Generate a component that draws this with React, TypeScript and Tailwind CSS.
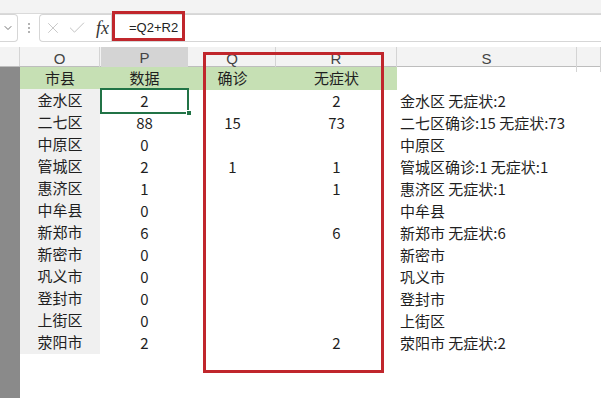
import { Check, ChevronDown, X } from "lucide-react";

const cjk = "font-['Noto_Sans_CJK_SC','Noto_Sans',sans-serif]";

const rows: [string, string, string, string][] = [
  ["金水区", "2", "", "2"],
  ["二七区", "88", "15", "73"],
  ["中原区", "0", "", ""],
  ["管城区", "2", "1", "1"],
  ["惠济区", "1", "", "1"],
  ["中牟县", "0", "", ""],
  ["新郑市", "6", "", "6"],
  ["新密市", "0", "", ""],
  ["巩义市", "0", "", ""],
  ["登封市", "0", "", ""],
  ["上街区", "0", "", ""],
  ["荥阳市", "2", "", "2"],
];

// S column: =O & IF(Q,"确诊:"&Q,"") & IF(R," 无症状:"&R,"")
function summary(name: string, q: string, r: string) {
  return name + (q ? `确诊:${q}` : "") + (r ? ` 无症状:${r}` : "");
}

const cols = "grid grid-cols-[80px_89px_87px_121px_180px_1fr]";

export default function App() {
  return (
    <div className={`relative w-[601px] h-[398px] overflow-hidden bg-white text-[#1f1f1f] ${cjk}`}>
      {/* ribbon edge */}
      <div className="h-[14px] bg-[#f3f3f3] border-b border-[#dadada]" />

      {/* formula bar */}
      <div className="flex h-[28px]">
        <div className="w-[18px] flex items-center justify-end pr-[3px] border-y border-r border-[#d6d6d6] rounded-r-[4px]">
          <ChevronDown size={12} strokeWidth={1.5} className="text-[#444]" />
        </div>
        <div className="w-[21px] flex flex-col items-center justify-center gap-[2px]">
          <div className="w-[2px] h-[2px] rounded-full bg-[#9a9a9a]" />
          <div className="w-[2px] h-[2px] rounded-full bg-[#9a9a9a]" />
          <div className="w-[2px] h-[2px] rounded-full bg-[#9a9a9a]" />
        </div>
        <div className="w-[72px] flex items-center pl-[4px] gap-[5px] border-y border-l border-[#d6d6d6] rounded-l-[4px]">
          <X size={18} strokeWidth={1.1} className="text-[#bdbdbd]" />
          <Check size={20} strokeWidth={1.1} className="text-[#bdbdbd]" />
          <span className="ml-[4px] font-['Liberation_Serif',serif] italic text-[18px] leading-none text-[#333]">fx</span>
        </div>
        <div className="flex-1 flex items-center pl-[17px] border-y border-l border-[#d6d6d6] font-['Liberation_Sans',sans-serif] text-[13px] text-[#222]">
          =Q2+R2
        </div>
      </div>

      {/* column headings */}
      <div className="mt-[5px] flex h-[20px] bg-[#f3f3f3] border-b border-[#bdbdbd] font-['Liberation_Sans',sans-serif] text-[15px] text-[#444]">
        <div className="w-[20px] border-r border-[#d4d4d4]" />
        <div className={`flex-1 ${cols}`}>
          {["O", "P", "Q", "R", "S", ""].map((c) => (
            <div
              key={c}
              className={
                c === "P"
                  ? "flex items-center justify-center bg-[#d4d4d4] border-b-2 border-[#217346] mx-px"
                  : "flex items-center justify-center border-r border-[#d4d4d4]"
              }
            >
              {c}
            </div>
          ))}
        </div>
      </div>

      {/* sheet body */}
      <div className="flex h-[331px]">
        <div className="w-[20px] bg-[#8a8a8a]" />
        <div className="flex-1 flex flex-col text-[15px]">
          <div className={`${cols} h-[22px]`}>
            <div className="col-span-4 grid grid-cols-[80px_89px_87px_121px] bg-[#c6e0b4]">
              <div className="flex items-center justify-center">市县</div>
              <div className="flex items-center justify-center">数据</div>
              <div className="flex items-center justify-center">确诊</div>
              <div className="flex items-center justify-center">无症状</div>
            </div>
          </div>
          {rows.map(([name, total, q, r], i) => (
            <div key={name} className={`${cols} h-[22px]`}>
              <div className="flex items-center justify-center bg-[#f0f0f0] border-b border-white">{name}</div>
              <div className="relative flex items-center justify-center">
                {total}
                {i === 0 && (
                  <>
                    <div className="absolute -top-px -bottom-px left-0 right-0 border-2 border-[#217346]" />
                    <div className="absolute -bottom-[3px] -right-[3px] w-[6px] h-[6px] bg-[#217346] border border-white" />
                  </>
                )}
              </div>
              <div className="flex items-center justify-center">{q}</div>
              <div className="flex items-center justify-center">{r}</div>
              <div className="flex items-center pl-[3px] whitespace-nowrap">{summary(name, q, r)}</div>
              <div />
            </div>
          ))}
        </div>
      </div>

      {/* red callouts */}
      <div className="absolute left-[112px] top-[11px] w-[73px] h-[30px] border-[3px] border-[#c0262c]" />
      <div className="absolute left-[203px] top-[52px] w-[181px] h-[321px] border-[3px] border-[#c0262c]" />
    </div>
  );
}
